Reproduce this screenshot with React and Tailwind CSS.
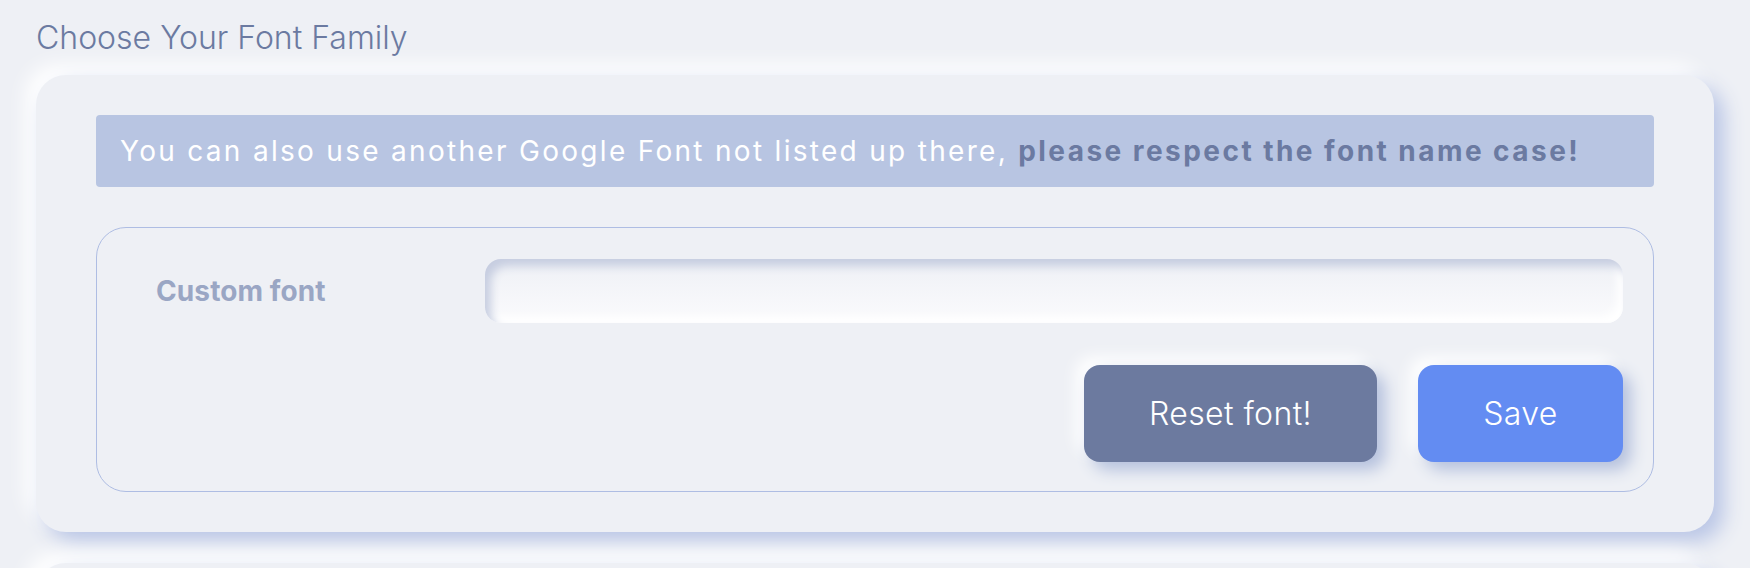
export default function App() {
  return (
    <div
      className="min-h-screen w-full bg-[#eef0f5] px-[36px] pt-[14px]"
      style={{ fontFamily: "Inter, 'Noto Sans', sans-serif" }}
    >
      <h1 className="text-[32px] leading-[48px] font-light text-[#6b7aa1]">
        Choose Your Font Family
      </h1>

      <div className="mt-[13px] rounded-[30px] bg-[#eef0f5] px-[60px] pt-[40px] pb-[40px] shadow-[10px_10px_20px_#bac6e6,-10px_-10px_20px_#ffffff]">
        <div className="flex h-[72px] items-center rounded-[4px] bg-[#b8c5e2] pl-[24px] text-[28px] tracking-[2.3px] text-white">
          <span className="font-normal whitespace-pre">
            {"You can also use another Google Font not listed up there, "}
          </span>
          <span className="font-bold tracking-[2.45px] text-[#6b7aa1]">please respect the font name case!</span>
        </div>

        <div className="mt-[40px] rounded-[30px] border border-[#aebde3] pt-[31px] pr-[30px] pb-[29px] pl-[59px]">
          <div className="flex items-center">
            <label className="w-[329px] shrink-0 text-[28px] font-bold tracking-[0.1px] text-[#9aa6c4]">
              Custom font
            </label>
            <input
              type="text"
              className="h-[64px] flex-1 rounded-[16px] bg-gradient-to-b from-[#eef0f5] to-[#fbfbfd] px-5 text-[24px] text-[#6b7aa1] outline-none shadow-[inset_6px_7px_10px_#c6cde0,inset_-6px_-6px_10px_#ffffff]"
            />
          </div>
          <div className="mt-[42px] flex justify-end gap-[41px]">
            <button className="flex h-[97px] w-[293px] items-center justify-center rounded-[16px] bg-[#6c7a9f] text-[32px] font-light tracking-[0.4px] text-white shadow-[8px_8px_16px_#b4c0dd,-8px_-8px_16px_#ffffff]">
              Reset font!
            </button>
            <button className="flex h-[97px] w-[205px] items-center justify-center rounded-[16px] bg-[#638cf2] text-[32px] font-light tracking-[0.4px] text-white shadow-[8px_8px_16px_#b4c0dd,-8px_-8px_16px_#ffffff]">
              Save
            </button>
          </div>
        </div>
      </div>

      <div className="mt-[31px] h-[300px] rounded-[30px] bg-[#eef0f5] shadow-[10px_10px_20px_#bac6e6,-10px_-10px_20px_#ffffff]"></div>
    </div>
  );
}
